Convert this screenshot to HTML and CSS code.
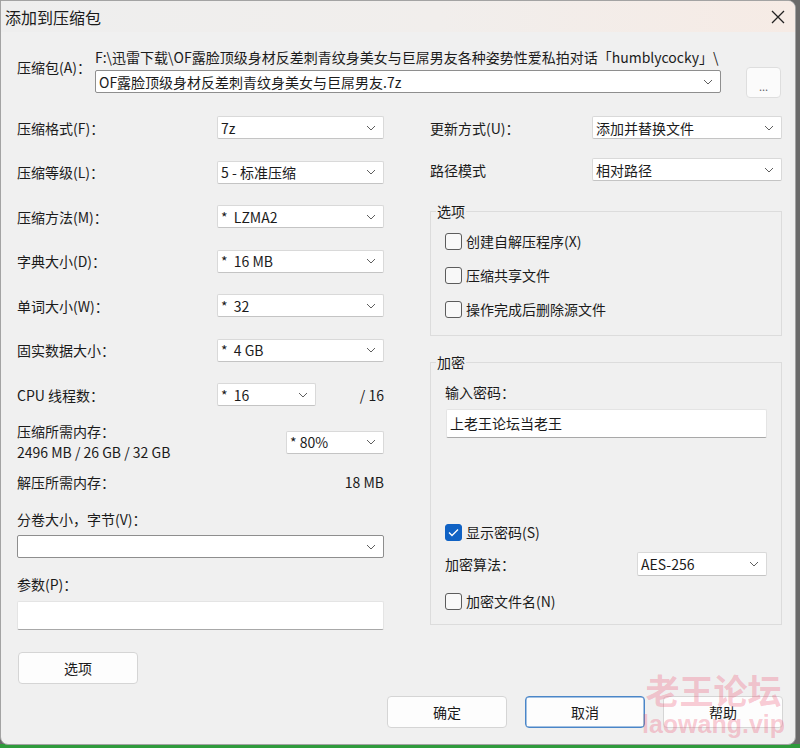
FILE: index.html
```html
<!DOCTYPE html>
<html lang="zh-CN">
<head>
    <meta charset="UTF-8">
    <title>添加到压缩包</title>
    <link rel="stylesheet" href="styles.css">
</head>
<body>
<div class="window">
    <div class="titlebar">
        <span class="title">添加到压缩包</span>
        <svg class="close" width="14" height="14" viewBox="0 0 14 14"><path d="M1 1L13 13M13 1L1 13"/></svg>
    </div>

    <div class="content">
        <div class="archive">
            <span class="archive-label">压缩包(A)：</span>
            <div class="archive-stack">
                <div class="path">F:\迅雷下载\OF露脸顶级身材反差刺青纹身美女与巨屌男友各种姿势性爱私拍对话「humblycocky」\</div>
                <div class="combo edit">
                    <span>OF露脸顶级身材反差刺青纹身美女与巨屌男友.7z</span>
                    <svg class="chev" width="10" height="6" viewBox="0 0 10 6"><path d="M1 1L5 5L9 1"/></svg>
                </div>
            </div>
            <button class="browse">...</button>
        </div>

        <div class="main">
            <div class="col-left">
                <div class="rows">
                    <div class="row">
                        <span>压缩格式(F)：</span>
                        <div class="combo"><span>7z</span><svg class="chev" width="10" height="6" viewBox="0 0 10 6"><path d="M1 1L5 5L9 1"/></svg></div>
                    </div>
                    <div class="row">
                        <span>压缩等级(L)：</span>
                        <div class="combo"><span>5 - 标准压缩</span><svg class="chev" width="10" height="6" viewBox="0 0 10 6"><path d="M1 1L5 5L9 1"/></svg></div>
                    </div>
                    <div class="row">
                        <span>压缩方法(M)：</span>
                        <div class="combo"><span class="pre">*  LZMA2</span><svg class="chev" width="10" height="6" viewBox="0 0 10 6"><path d="M1 1L5 5L9 1"/></svg></div>
                    </div>
                    <div class="row">
                        <span>字典大小(D)：</span>
                        <div class="combo"><span class="pre">*  16 MB</span><svg class="chev" width="10" height="6" viewBox="0 0 10 6"><path d="M1 1L5 5L9 1"/></svg></div>
                    </div>
                    <div class="row">
                        <span>单词大小(W)：</span>
                        <div class="combo"><span class="pre">*  32</span><svg class="chev" width="10" height="6" viewBox="0 0 10 6"><path d="M1 1L5 5L9 1"/></svg></div>
                    </div>
                    <div class="row">
                        <span>固实数据大小：</span>
                        <div class="combo"><span class="pre">*  4 GB</span><svg class="chev" width="10" height="6" viewBox="0 0 10 6"><path d="M1 1L5 5L9 1"/></svg></div>
                    </div>
                    <div class="row cpu">
                        <span>CPU 线程数：</span>
                        <div class="combo"><span class="pre">*  16</span><svg class="chev" width="10" height="6" viewBox="0 0 10 6"><path d="M1 1L5 5L9 1"/></svg></div>
                        <span class="right">/ 16</span>
                    </div>
                </div>

                <div class="mem">
                    <div class="mem-text">
                        <div>压缩所需内存：</div>
                        <div>2496 MB / 26 GB / 32 GB</div>
                    </div>
                    <div class="combo"><span class="pre">* 80%</span><svg class="chev" width="10" height="6" viewBox="0 0 10 6"><path d="M1 1L5 5L9 1"/></svg></div>
                </div>

                <div class="plain">
                    <span>解压所需内存：</span>
                    <span>18 MB</span>
                </div>

                <div class="field-label split-label">分卷大小，字节(V)：</div>
                <div class="combo edit wide"><span></span><svg class="chev" width="10" height="6" viewBox="0 0 10 6"><path d="M1 1L5 5L9 1"/></svg></div>

                <div class="field-label param-label">参数(P)：</div>
                <div class="textbox param"></div>

                <button class="btn options-btn">选项</button>
            </div>

            <div class="col-right">
                <div class="rrow">
                    <span>更新方式(U)：</span>
                    <div class="combo"><span>添加并替换文件</span><svg class="chev" width="10" height="6" viewBox="0 0 10 6"><path d="M1 1L5 5L9 1"/></svg></div>
                </div>
                <div class="rrow second">
                    <span>路径模式</span>
                    <div class="combo"><span>相对路径</span><svg class="chev" width="10" height="6" viewBox="0 0 10 6"><path d="M1 1L5 5L9 1"/></svg></div>
                </div>

                <fieldset class="group options-group">
                    <legend>选项</legend>
                    <div class="checks">
                        <label class="check"><span class="box"></span>创建自解压程序(X)</label>
                        <label class="check"><span class="box"></span>压缩共享文件</label>
                        <label class="check"><span class="box"></span>操作完成后删除源文件</label>
                    </div>
                </fieldset>

                <fieldset class="group crypt-group">
                    <legend>加密</legend>
                    <div class="field-label pw-label">输入密码：</div>
                    <div class="textbox password">上老王论坛当老王</div>
                    <label class="check show-pw">
                        <span class="box checked"><svg width="11" height="9" viewBox="0 0 11 9"><path d="M1 4.5L4 7.5L10 1.5"/></svg></span>显示密码(S)
                    </label>
                    <div class="alg">
                        <span>加密算法：</span>
                        <div class="combo"><span>AES-256</span><svg class="chev" width="10" height="6" viewBox="0 0 10 6"><path d="M1 1L5 5L9 1"/></svg></div>
                    </div>
                    <label class="check names"><span class="box"></span>加密文件名(N)</label>
                </fieldset>
            </div>
        </div>

        <div class="footer">
            <button class="btn">确定</button>
            <button class="btn focused">取消</button>
            <button class="btn">帮助</button>
        </div>
    </div>

    <div class="watermark">
        <div class="wm-cn">老王论坛</div>
        <div class="wm-en">laowang.vip</div>
    </div>
</div>
</body>
</html>
```

FILE: styles.css
```css
*{
    box-sizing: border-box;
}
html, body{
    height: 100%;
}
body{
    margin: 0;
    background: linear-gradient(to bottom, #6a6a6a 0, #6a6a6a 744px, #2f9b3c 744px);
    font-family: "Noto Sans CJK SC", sans-serif;
    font-size: 14px;
    color: #1b1b1b;
}
.window{
    position: relative;
    width: 796px;
    height: 745px;
    background: #f0f0f0;
    border: 1px solid #a3a3a3;
    border-radius: 0 8px 8px 8px;
    overflow: hidden;
}
.titlebar{
    height: 31px;
    display: flex;
    align-items: center;
    justify-content: space-between;
    padding: 0 10px 0 4px;
    background: linear-gradient(to right, #eeeeee 0%, #f1eeec 55%, #f6ebe5 100%);
}
.title{
    font-size: 16px;
    line-height: 20px;
}
.close path{
    stroke: #222;
    stroke-width: 1.3;
    fill: none;
}
.content{
    padding: 15px 12px 0 16px;
}

/* archive path */
.archive{
    display: grid;
    grid-template-columns: 78px 626px 1fr;
    align-items: start;
}
.archive-label{
    margin-top: 10px;
    line-height: 20px;
}
.path{
    line-height: 20px;
    white-space: nowrap;
}
.archive .combo{
    margin-top: 3px;
}
.browse{
    margin: 20px 0 0 25px;
    width: 35px;
    height: 31px;
    border: 1px solid #dedede;
    border-radius: 4px;
    background: #fbfbfb;
    color: #666;
    font-size: 11px;
    padding: 6px 0 0;
    font-family: inherit;
}

/* combo box */
.combo{
    height: 23px;
    display: flex;
    align-items: center;
    justify-content: space-between;
    padding: 0 7px 0 3px;
    background: #fff;
    border: 1px solid #d9d9d9;
    border-bottom-color: #c4c4c4;
    border-radius: 2px;
    white-space: nowrap;
}
.combo.edit{
    border-color: #8e8e8e;
}
.chev path{
    stroke: #5e5e5e;
    stroke-width: 1;
    fill: none;
}
.pre{
    white-space: pre;
}

/* columns */
.main{
    display: grid;
    grid-template-columns: 367px 352px;
    column-gap: 46px;
    margin-top: 18px;
}
.col-left, .col-right{
    display: flex;
    flex-direction: column;
}
.rows{
    display: flex;
    flex-direction: column;
    gap: 21.5px;
}
.row{
    display: grid;
    grid-template-columns: 200px 167px;
    align-items: center;
    height: 23px;
}
.row.cpu{
    grid-template-columns: 200px 99px 1fr;
}
.right{
    text-align: right;
}
.mem{
    display: grid;
    grid-template-columns: 1fr 98px;
    align-items: center;
    margin-top: 15px;
    line-height: 21px;
}
.plain{
    display: flex;
    justify-content: space-between;
    line-height: 20px;
    margin-top: 9px;
}
.field-label{
    line-height: 20px;
}
.split-label{
    margin-top: 17px;
}
.combo.wide{
    margin-top: 6px;
}
.param-label{
    margin-top: 16px;
}
.textbox{
    background: #fff;
    border: 1px solid #e4e4e4;
    border-bottom: 1px solid #a8a8a8;
    border-radius: 2px;
}
.param{
    margin-top: 7px;
    height: 29px;
}
.btn{
    width: 120px;
    height: 32px;
    border: 1px solid #d5d5d5;
    border-radius: 4px;
    background: #fdfdfd;
    font-family: inherit;
    font-size: 14px;
    color: #1b1b1b;
    padding: 0;
}
.btn.focused{
    border-color: #4a86c8;
    box-shadow: inset 0 0 0 0.5px #4a86c8;
}
.options-btn{
    margin: 22px 0 0 1px;
}

/* right column */
.rrow{
    display: grid;
    grid-template-columns: 162px 190px;
    align-items: center;
    height: 23px;
}
.rrow.second{
    margin-top: 19px;
}
.group{
    margin: 0;
    padding: 0 14px 14px 14px;
    border: 1px solid #dcdcdc;
    min-width: 0;
}
.group legend{
    line-height: 20px;
    padding: 0 1px;
    margin-left: -9px;
}
.options-group{
    margin-top: 20px;
}
.crypt-group{
    margin-top: 16px;
    padding-bottom: 11px;
}
.checks{
    display: flex;
    flex-direction: column;
    gap: 10px;
    padding-top: 8px;
}
.check{
    display: flex;
    align-items: center;
    gap: 4px;
    height: 24px;
}
.box{
    width: 17px;
    height: 17px;
    border: 1px solid #5c5c5c;
    border-radius: 3px;
    background: #f8f8f8;
    display: flex;
    align-items: center;
    justify-content: center;
}
.box.checked{
    background: #1062c4;
    border-color: #1062c4;
}
.box.checked path{
    stroke: #fff;
    stroke-width: 1.3;
    fill: none;
}
.pw-label{
    margin-top: 10px;
}
.password{
    margin: 7px 0 0 1px;
    height: 29px;
    padding: 2px 3px;
    line-height: 22px;
}
.show-pw{
    margin-top: 82px;
}
.alg{
    display: grid;
    grid-template-columns: 1fr 130px;
    align-items: center;
    margin-top: 8px;
}
.alg .combo{
    height: 24px;
}
.names{
    margin-top: 13px;
}

/* buttons */
.footer{
    display: flex;
    justify-content: flex-end;
    gap: 18px;
    margin-top: 12px;
}

.watermark{
    position: absolute;
    left: 640px;
    top: 669px;
    width: 145px;
    text-align: center;
    color: rgba(238, 80, 112, 0.3);
    font-weight: bold;
    pointer-events: none;
}
.wm-cn{
    font-size: 34px;
    line-height: 40px;
}
.wm-en{
    font-family: "Liberation Sans", sans-serif;
    font-size: 25px;
    line-height: 28px;
}
```
